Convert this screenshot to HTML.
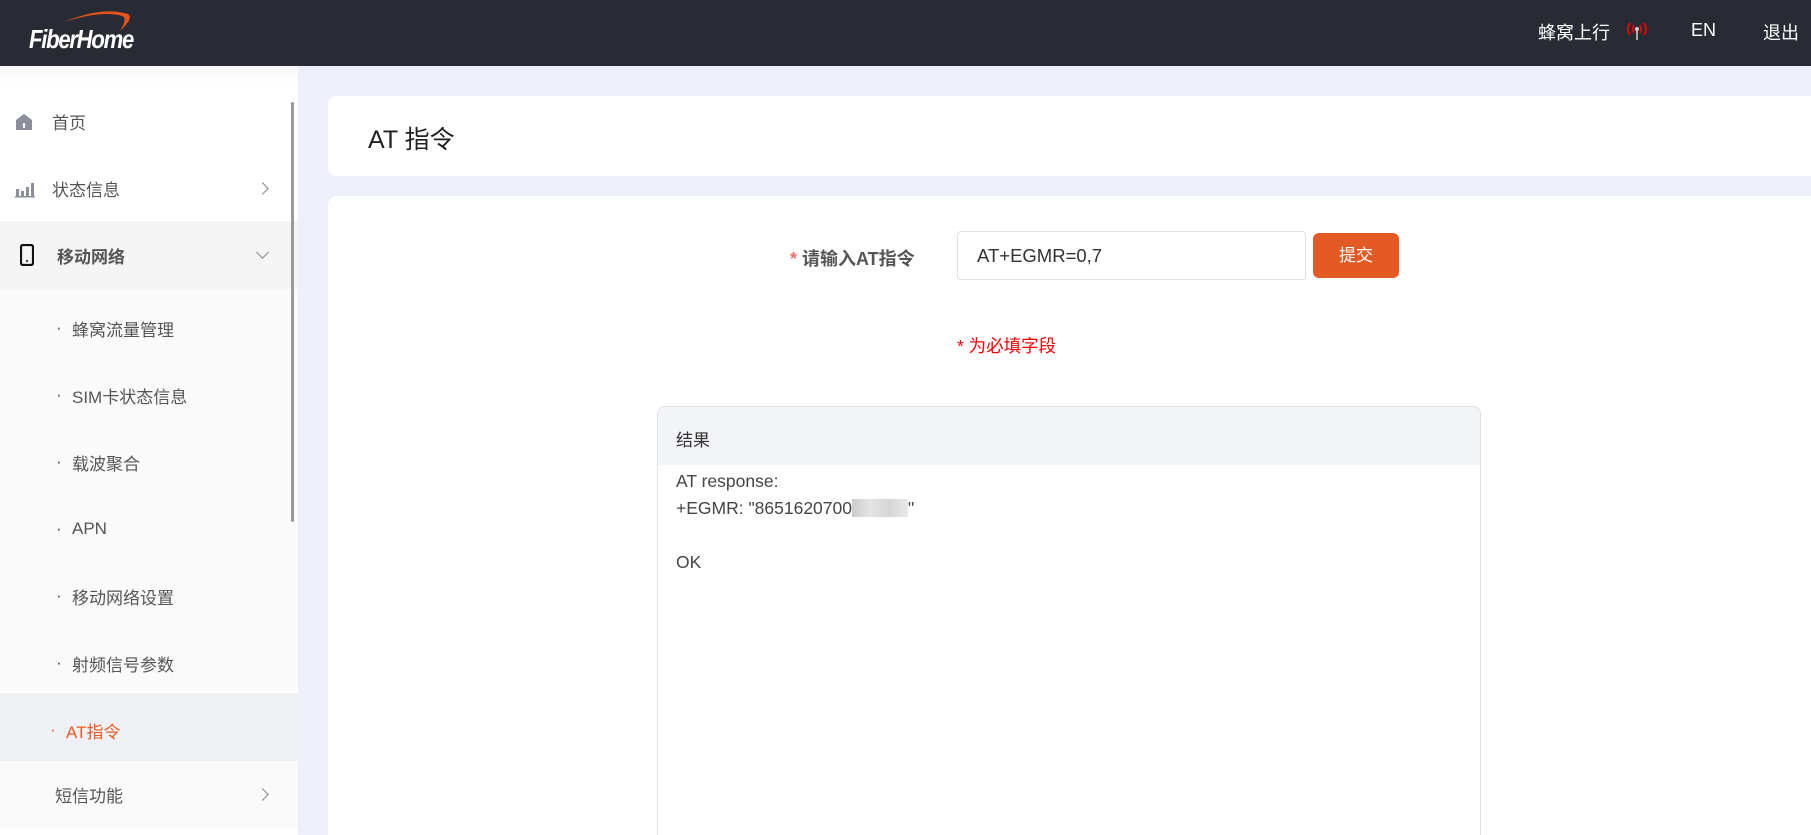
<!DOCTYPE html>
<html><head><meta charset="utf-8"><style>
*{margin:0;padding:0;box-sizing:border-box}
html,body{width:1811px;height:835px;overflow:hidden}
body{background:#edf0f8;font-family:"Liberation Sans","Noto Sans CJK SC",sans-serif;position:relative}
.hd{position:absolute;left:0;top:0;width:1811px;height:66px;background:#282b33}
.logo{position:absolute;left:29px;top:24px;color:#fff;font-style:italic;font-weight:bold;font-size:26px;letter-spacing:-1.5px;transform:scaleX(.85);transform-origin:left}
.hr{position:absolute;top:19px;color:#fff;font-size:18px}
.sb{position:absolute;left:0;top:66px;width:298px;height:769px;background:#fff}
.sb .top{height:20px;background:linear-gradient(#f8f8fa,#fff)}
.it{position:absolute;left:0;width:298px;height:67px;display:flex;align-items:center;font-size:17px;color:#555}
.sub{background:#fafafa;padding-top:11px}
.scroll{position:absolute;left:291px;top:36px;width:3px;height:420px;background:#9a9a9a;border-radius:2px}
.card{position:absolute;background:#fff;border-radius:9px}
.chev{position:absolute;left:258px;width:9px;height:9px;border-right:1.6px solid #888;border-top:1.6px solid #888;transform:rotate(45deg)}
</style></head><body>
<div class="hd">
<svg style="position:absolute;left:62px;top:8px" width="72" height="24"><path d="M2 14 Q40 -2 66 6 Q72 10 58 23 Q66 10 60 8 Q40 2 2 14Z" fill="#e4541c"/></svg>
<div class="logo">FiberHome</div>
<div class="hr" style="left:1538px">蜂窝上行</div>
<svg style="position:absolute;left:1625px;top:20px" width="24" height="22"><path d="M5 3 Q1 9 5 15M9 5 Q7 9 9 13M19 3 Q23 9 19 15M15 5 Q17 9 15 13" stroke="#e00" stroke-width="1.8" fill="none"/><circle cx="12" cy="9" r="2" fill="#ccc"/><path d="M12 9V20" stroke="#ccc" stroke-width="1.6"/></svg>
<div class="hr" style="left:1691px;top:20px">EN</div>
<div class="hr" style="left:1763px">退出</div>
</div>
<div class="sb"><div class="top"></div>
<div class="it" style="top:22px;height:67px"><svg style="position:absolute;left:15px" width="18" height="18"><path d="M1 7 L9 1 L17 7 V17 H1Z" fill="#8a8f99"/><rect x="8" y="10" width="2" height="5" fill="#fff"/></svg><span style="position:absolute;left:52px">首页</span></div>
<div class="it" style="top:89px"><svg style="position:absolute;left:15px" width="20" height="18"><rect x="1" y="9" width="3" height="7" fill="#8a8f99"/><rect x="6" y="11" width="3" height="5" fill="#8a8f99"/><rect x="11" y="7" width="3" height="9" fill="#8a8f99"/><rect x="16" y="3" width="3" height="13" fill="#8a8f99"/><rect x="0" y="16" width="20" height="1.5" fill="#8a8f99"/></svg><span style="position:absolute;left:52px">状态信息</span><div class="chev" style="top:29px"></div></div>
<div class="it" style="top:155px;background:#f5f5f5;height:68px"><svg style="position:absolute;left:20px" width="14" height="22"><rect x="1" y="1" width="12" height="20" rx="2" fill="none" stroke="#111" stroke-width="2.2"/><circle cx="7" cy="17" r="1" fill="#111"/></svg><span style="position:absolute;left:57px;font-weight:bold;color:#555">移动网络</span><div class="chev" style="top:27px;transform:rotate(135deg)"></div></div>
<div class="it sub" style="top:223px"><span style="position:absolute;left:56px">·</span><span style="position:absolute;left:72px">蜂窝流量管理</span></div>
<div class="it sub" style="top:290px"><span style="position:absolute;left:56px">·</span><span style="position:absolute;left:72px">SIM卡状态信息</span></div>
<div class="it sub" style="top:357px"><span style="position:absolute;left:56px">·</span><span style="position:absolute;left:72px">载波聚合</span></div>
<div class="it sub" style="top:424px"><span style="position:absolute;left:56px">·</span><span style="position:absolute;left:72px">APN</span></div>
<div class="it sub" style="top:491px"><span style="position:absolute;left:56px">·</span><span style="position:absolute;left:72px">移动网络设置</span></div>
<div class="it sub" style="top:558px"><span style="position:absolute;left:56px">·</span><span style="position:absolute;left:72px">射频信号参数</span></div>
<div class="it" style="top:627px;background:#f0f1f5;height:68px;color:#f05a22;padding-top:6px"><span style="position:absolute;left:50px">·</span><span style="position:absolute;left:66px">AT指令</span></div>
<div class="it" style="top:695px;background:#fafafa"><span style="position:absolute;left:55px">短信功能</span><div class="chev" style="top:29px"></div></div>
<div class="scroll"></div>
</div>
<div class="card" style="left:328px;top:96px;width:1495px;height:80px"><div style="position:absolute;left:40px;top:24px;font-size:25px;color:#222">AT 指令</div></div>
<div class="card" style="left:328px;top:196px;width:1495px;height:650px">
<div style="position:absolute;left:462px;top:49px;font-size:18px;font-weight:bold;color:#555"><span style="color:#f56c6c">*</span> 请输入AT指令</div>
<div style="position:absolute;left:629px;top:35px;width:349px;height:49px;border:1px solid #dcdfe6;border-radius:4px;font-size:18.5px;color:#333;padding:13px 0 0 19px">AT+EGMR=0,7</div>
<div style="position:absolute;left:985px;top:37px;width:86px;height:45px;background:#e45a24;border-radius:6px;color:#fff;font-size:17px;text-align:center;line-height:45px">提交</div>
<div style="position:absolute;left:629px;top:137px;font-size:17.5px;color:#f00">* 为必填字段</div>
<div style="position:absolute;left:329px;top:210px;width:824px;height:460px;border:1px solid #dcdfe6;border-radius:8px;overflow:hidden">
<div style="height:58px;background:#f3f4f8;font-size:17px;color:#333;padding:19px 0 0 18px">结果</div>
<div style="padding:3px 0 0 18px;font-size:17.5px;color:#444;line-height:27px">AT response:<br>+EGMR: "8651620700<span style="display:inline-block;width:56px;height:18px;background:linear-gradient(90deg,#ccc,#e4e4e4,#d6d6d6,#e8e8e8);vertical-align:-3px"></span>"<br><br>OK</div>
</div>
</div>
</body></html>
